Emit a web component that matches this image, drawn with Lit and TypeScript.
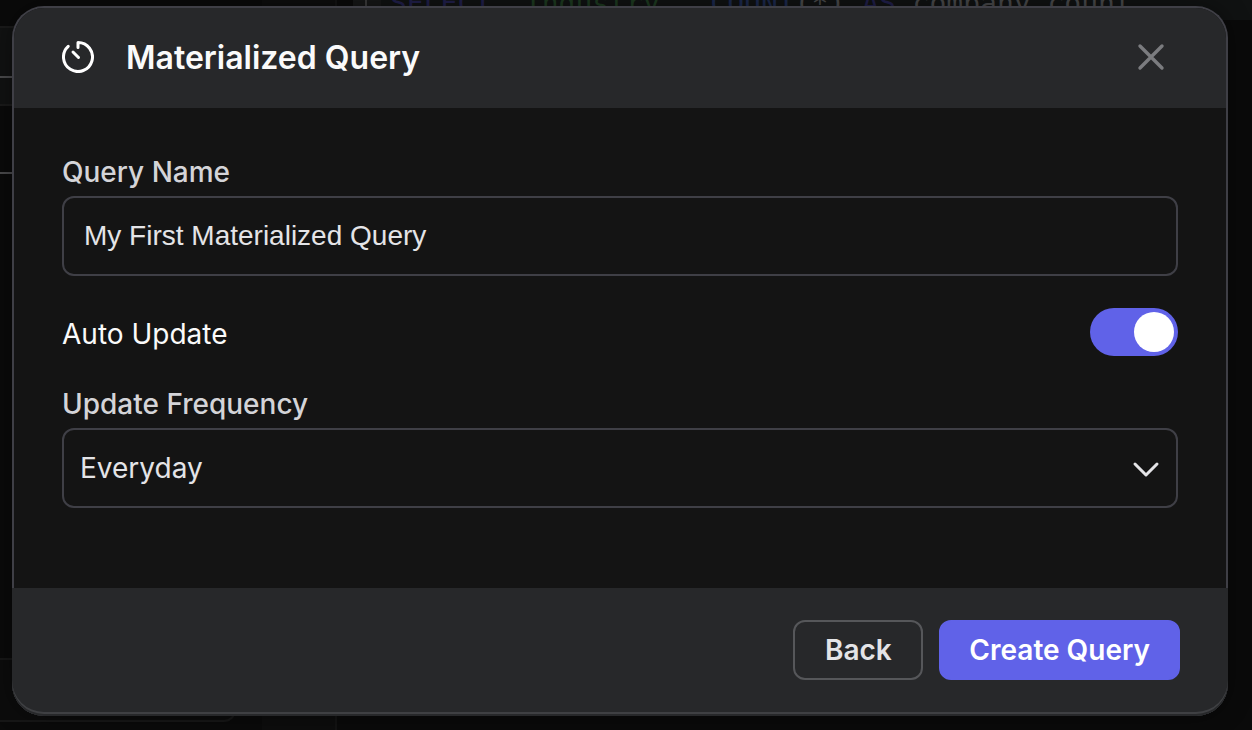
import { LitElement, html, css } from "lit";
import { customElement, state } from "lit/decorators.js";

@customElement("query-backdrop")
class QueryBackdrop extends LitElement {
  static styles = css`
    :host {
      display: grid;
      grid-template-columns: 262px 75px 1fr;
      background: #0a0a0a;
      overflow: hidden;
    }
    .side {
      display: flex;
      flex-direction: column;
      justify-content: space-between;
      padding: 26px 0 8px;
    }
    .card {
      box-sizing: border-box;
      height: 80px;
      border: solid #1a1a1a;
      border-width: 2px 0;
      background: #111212;
    }
    .stub {
      width: 12px;
      height: 2px;
      margin-top: 48px;
      background: #4a4a4c;
    }
    .card + .stub {
      margin-top: 66px;
    }
    .box {
      box-sizing: border-box;
      width: 236px;
      height: 64px;
      border: 2px solid #171717;
      border-left: 0;
      border-radius: 0 12px 12px 0;
      background: #0c0c0c;
    }
    .gutter {
      background: #0d0d0d;
      border-right: 2px solid #131313;
    }
    .editor {
      padding-left: 16px;
    }
    .line {
      display: flex;
      align-items: flex-end;
      height: 20px;
      background: #101212;
      color: #48494a;
      font: 28px/32px "DejaVu Sans Mono", monospace;
      white-space: pre;
    }
    .caret {
      box-sizing: border-box;
      width: 28px;
      height: 20px;
      margin-right: 9px;
      border-left: 12px solid #161717;
      background: linear-gradient(90deg, #3a3a3a 2px, #161717 2px);
    }
    .kw {
      color: #201f4a;
    }
    .str {
      color: #1d3a20;
    }
    .fn {
      color: #1c294d;
    }
  `;

  render() {
    return html`
      <div class="side">
        <div>
          <div class="card"><div class="stub"></div></div>
          <div class="stub"></div>
        </div>
        <div class="box"></div>
      </div>
      <div class="gutter"></div>
      <div class="editor">
        <div class="line"><span class="caret"></span><span><span class="kw">SELECT</span> <span class="str">"Industry"</span>, <span class="fn">COUNT</span>(*) <span class="kw">AS</span> company_count</span></div>
      </div>
    `;
  }
}

@customElement("app-root")
class AppRoot extends LitElement {
  @state() autoUpdate = true;

  static styles = css`
    :host {
      display: grid;
      min-height: 100vh;
      font-family: Inter, sans-serif;
      color: #e4e4e7;
    }
    query-backdrop,
    .overlay {
      grid-area: 1 / 1;
    }
    .overlay {
      z-index: 1;
      padding: 6px 24px 14px 12px;
    }
    .dialog {
      border: 2px solid #3f3f46;
      border-bottom: 0;
      border-radius: 32px;
      background: #141414;
      box-shadow: 0 0 24px #00000066;
    }
    .head {
      display: flex;
      align-items: center;
      gap: 32px;
      height: 100px;
      padding: 0 59px 2px 48px;
      box-sizing: border-box;
      border-radius: 30px 30px 0 0;
      background: #27282a;
    }
    .timer {
      width: 32px;
      height: 32px;
      color: #fff;
    }
    h1 {
      flex: 1;
      margin: 0;
      padding-top: 2px;
      color: #fafafa;
      font-size: 32px;
      line-height: 40px;
      font-weight: 600;
    }
    button {
      font: 600 28px/36px Inter, sans-serif;
      cursor: pointer;
    }
    .close {
      display: flex;
      padding: 0;
      border: 0;
      background: none;
      color: #7b7c7f;
    }
    svg {
      display: block;
      fill: none;
      stroke: currentColor;
      stroke-linecap: round;
      stroke-linejoin: round;
    }
    .body {
      display: flex;
      flex-direction: column;
      gap: 32px;
      padding: 48px 48px 80px;
    }
    .field {
      display: flex;
      flex-direction: column;
      gap: 8px;
    }
    label {
      font-size: 28px;
      line-height: 32px;
    }
    .field label {
      color: #d4d4d8;
      font-weight: 500;
    }
    .row {
      display: flex;
      align-items: center;
      justify-content: space-between;
      color: #fafafa;
    }
    .row label {
      padding-top: 4px;
    }
    .control {
      box-sizing: border-box;
      width: 100%;
      height: 80px;
      margin: 0;
      border: 2px solid #3f3f46;
      border-radius: 12px;
      background: transparent;
      color: #e4e4e7;
      font-size: 28px;
      outline: none;
      appearance: none;
    }
    .text {
      padding: 0 20px;
      font-family: "Liberation Sans", sans-serif;
    }
    .pick {
      padding: 0 64px 0 16px;
      font-family: inherit;
    }
    .select {
      display: grid;
      align-items: center;
    }
    .select > * {
      grid-area: 1 / 1;
    }
    .chevron {
      justify-self: end;
      margin-right: 16px;
      pointer-events: none;
    }
    .switch {
      appearance: none;
      box-sizing: border-box;
      width: 88px;
      height: 48px;
      margin: 0;
      padding: 4px;
      border-radius: 24px;
      background: #3f3f46;
      cursor: pointer;
    }
    .switch::before {
      content: "";
      display: block;
      width: 40px;
      height: 40px;
      border-radius: 50%;
      background: #fff;
    }
    .switch:checked {
      background: #6062e8;
    }
    .switch:checked::before {
      margin-left: auto;
    }
    .foot {
      display: flex;
      justify-content: flex-end;
      gap: 16px;
      margin: 0 -2px;
      padding: 32px 48px 36px;
      border-radius: 0 0 32px 32px;
      background: #27282a;
      box-shadow: inset 0 -2px #27282a, inset 0 -4px #3f4043;
    }
    .btn {
      min-width: 130px;
      height: 60px;
      padding: 0 28px;
      border: 2px solid #56575a;
      border-radius: 12px;
      background: transparent;
      color: #e4e4e7;
    }
    .primary {
      border-color: #6062e8;
      background: #6062e8;
      color: #fff;
    }
  `;

  private toggle(e: Event) {
    this.autoUpdate = (e.target as HTMLInputElement).checked;
  }

  render() {
    return html`
      <query-backdrop aria-hidden="true"></query-backdrop>
      <div class="overlay">
        <section class="dialog" role="dialog" aria-labelledby="title">
          <header class="head">
            <svg class="timer" viewBox="0 0 32 32" stroke-width="3">
              <path d="M16 6.5V1.5A14.5 14.5 0 1 1 6.2 5.3" />
              <path d="M11 11l5.5 5.5" />
            </svg>
            <h1 id="title">Materialized Query</h1>
            <button class="close" type="button" aria-label="Close">
              <svg width="32" height="32" viewBox="0 0 32 32" stroke-width="3.4">
                <path d="M5 5l22 22M27 5L5 27" />
              </svg>
            </button>
          </header>
          <div class="body">
            <div class="field">
              <label for="name">Query Name</label>
              <input id="name" class="control text" type="text" value="My First Materialized Query" />
            </div>
            <div class="row">
              <label for="auto">Auto Update</label>
              <input id="auto" class="switch" type="checkbox" role="switch" .checked=${this.autoUpdate} @change=${this.toggle} />
            </div>
            <div class="field">
              <label for="freq">Update Frequency</label>
              <div class="select">
                <select id="freq" class="control pick">
                  <option>Everyday</option>
                </select>
                <svg class="chevron" width="32" height="32" viewBox="0 0 32 32" stroke-width="3">
                  <path d="M5 12l11 11 11-11" />
                </svg>
              </div>
            </div>
          </div>
          <footer class="foot">
            <button class="btn" type="button">Back</button>
            <button class="btn primary" type="button">Create Query</button>
          </footer>
        </section>
      </div>
    `;
  }
}
